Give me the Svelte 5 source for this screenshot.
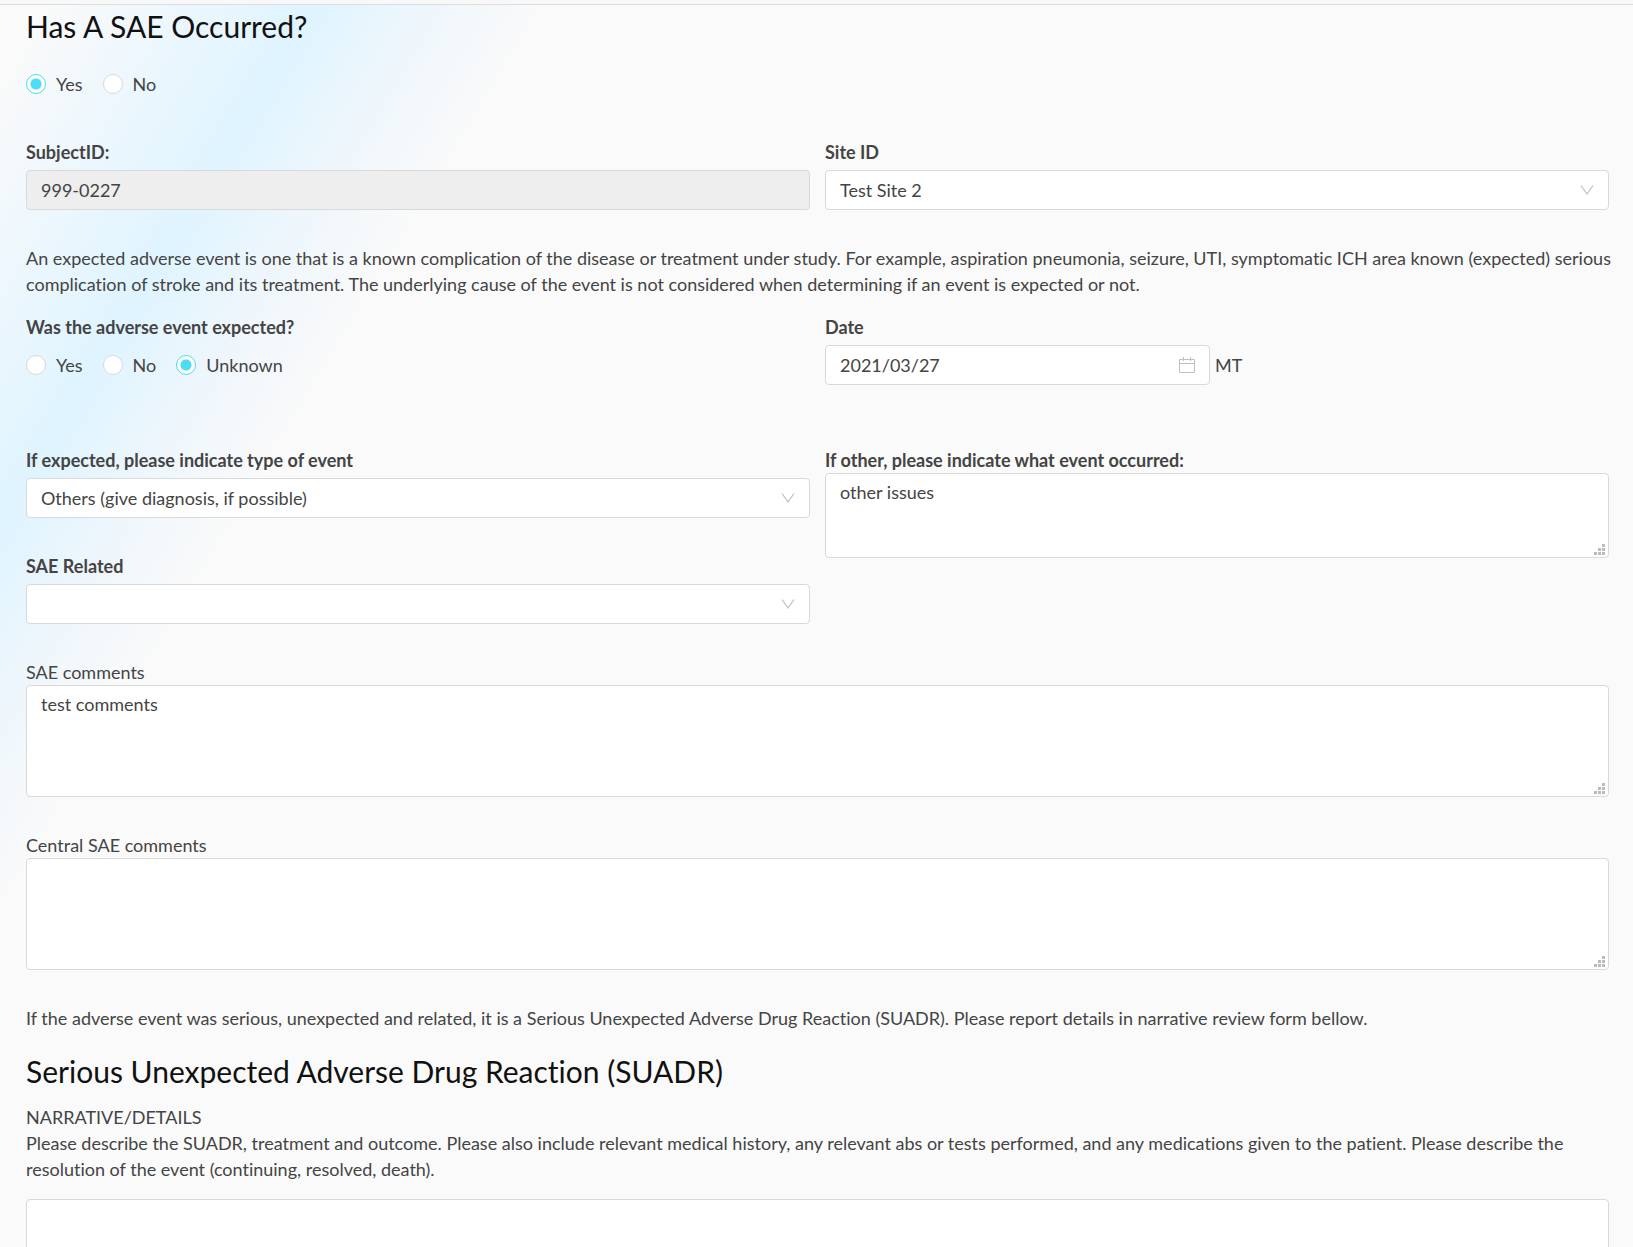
<style>
  :global(body) {
    margin: 0;
    background: #fafafa;
  }

  .page {
    box-sizing: border-box;
    border-top: 4px solid #f8f8f9;
    background: linear-gradient(121deg, #fafafa 40px, #edf7fd 150px, #dff4ff 270px, #edf6fc 360px, #fafafa 470px);
    color: #444;
    font: 18px/26px Lato, sans-serif;
    font-variant-ligatures: none;
  }

  form {
    padding: 0 24px 0 26px;
    border-top: 1px solid #dcdde0;
  }

  h2 {
    margin: 0;
    color: #111;
    font: 400 30px/42px Lato, sans-serif;
    font-variant-ligatures: none;
  }

  p {
    margin: 0 -8px 0 0;
  }

  fieldset {
    margin: 0;
    padding: 0;
    border: 0;
    min-width: 0;
  }

  legend {
    padding: 0;
  }

  .bold {
    font-weight: 700;
  }

  .radios {
    display: flex;
    align-items: center;
    gap: 20px;
    height: 40px;
  }

  .occurred {
    margin: 17px 0 35px;
  }

  .radios label {
    display: flex;
    align-items: center;
    gap: 10px;
  }

  input[type='radio'] {
    appearance: none;
    box-sizing: border-box;
    width: 20px;
    height: 20px;
    margin: 0;
    border: 1px solid #d9d9d9;
    border-radius: 50%;
    background: #fff;
  }

  input[type='radio']:checked {
    border-color: #4cdcf4;
    background: radial-gradient(circle, #4cdcf4 5px, #fff 6px);
  }

  .row {
    display: grid;
    grid-template-columns: 1fr 1fr;
    column-gap: 15px;
    align-items: start;
    margin-bottom: 35px;
  }

  .event {
    margin-bottom: 62px;
  }

  .column {
    display: grid;
    gap: 35px;
  }

  .field {
    display: flex;
    flex-direction: column;
  }

  .spaced {
    gap: 5px;
  }

  .choice .radios {
    margin-top: 5px;
  }

  .wide {
    margin-bottom: 35px;
  }

  .control {
    position: relative;
    display: flex;
  }

  input[type='text'],
  select,
  textarea {
    appearance: none;
    box-sizing: border-box;
    display: block;
    width: 100%;
    height: 40px;
    margin: 0;
    padding: 0 14px;
    border: 1px solid #d9d9d9;
    border-radius: 4px;
    background: #fff;
    color: #444;
    font: inherit;
  }

  input[type='text']:disabled {
    background: #eee;
    opacity: 1;
  }

  textarea {
    height: 112px;
    padding: 5px 14px;
    resize: vertical;
  }

  textarea::-webkit-resizer {
    display: none;
  }

  textarea.short {
    height: 85px;
  }

  .arrow,
  .calendar,
  .grip {
    position: absolute;
    pointer-events: none;
  }

  .arrow {
    top: 14px;
    right: 15px;
  }

  .calendar {
    top: 12px;
    right: 15px;
  }

  .grip {
    right: 4px;
    bottom: 3px;
  }

  .date {
    display: flex;
    align-items: center;
    gap: 5px;
  }

  .date .control {
    width: 385px;
  }

  .intro {
    margin-bottom: 17px;
  }

  .suadr {
    margin: 19px 0 12px;
  }
</style>

{#snippet arrow()}
  <svg class="arrow" width="14" height="12" viewBox="0 0 14 12" fill="none" stroke="#bfbfbf" stroke-width="1.2" aria-hidden="true">
    <path d="M1 1.5 7 10l6-8.5" />
  </svg>
{/snippet}

{#snippet grip()}
  <svg class="grip" width="11" height="11" viewBox="0 0 11 11" fill="#bbb" aria-hidden="true">
    <path d="M8 0h3v3H8zM4 4h3v3H4zM8 4h3v3H8zM0 8h3v3H0zM4 8h3v3H4zM8 8h3v3H8z" />
  </svg>
{/snippet}

<div class="page">
  <form>
    <h2 id="occurred">Has A SAE Occurred?</h2>
    <div class="radios occurred" role="radiogroup" aria-labelledby="occurred">
      {#each ['Yes', 'No'] as option}
        <label><input type="radio" name="occurred" value={option} bind:group={occurred} />{option}</label>
      {/each}
    </div>

    <div class="row">
      <div class="field spaced">
        <label class="bold" for="subject">SubjectID:</label>
        <input id="subject" type="text" value="999-0227" disabled />
      </div>
      <div class="field spaced">
        <label class="bold" for="site">Site ID</label>
        <div class="control">
          <select id="site" bind:value={site}>
            {#each sites as name}
              <option value={name}>{name}</option>
            {/each}
          </select>
          {@render arrow()}
        </div>
      </div>
    </div>

    <p class="intro">An expected adverse event is one that is a known complication of the disease or treatment under study. For example, aspiration pneumonia, seizure, UTI, symptomatic ICH area known (expected) serious complication of stroke and its treatment. The underlying cause of the event is not considered when determining if an event is expected or not.</p>

    <div class="row event">
      <fieldset class="choice">
        <legend class="bold">Was the adverse event expected?</legend>
        <div class="radios">
          {#each ['Yes', 'No', 'Unknown'] as option}
            <label><input type="radio" name="expected" value={option} bind:group={expected} />{option}</label>
          {/each}
        </div>
      </fieldset>
      <div class="field spaced">
        <label class="bold" for="date">Date</label>
        <div class="date">
          <div class="control">
            <input id="date" type="text" bind:value={date} />
            <svg class="calendar" width="16" height="16" viewBox="0 0 16 16" fill="none" stroke="#bfbfbf" aria-hidden="true">
              <path d="M.5 2.5h15v13H.5zM.5 6.5h15M4.5 0v4M11.5 0v4" />
            </svg>
          </div>
          <span>MT</span>
        </div>
      </div>
    </div>

    <div class="row">
      <div class="column">
        <div class="field spaced">
          <label class="bold" for="type">If expected, please indicate type of event</label>
          <div class="control">
            <select id="type" bind:value={eventType}>
              {#each eventTypes as name}
                <option value={name}>{name}</option>
              {/each}
            </select>
            {@render arrow()}
          </div>
        </div>
        <div class="field spaced">
          <label class="bold" for="related">SAE Related</label>
          <div class="control">
            <select id="related" bind:value={related}>
              <option value=""></option>
            </select>
            {@render arrow()}
          </div>
        </div>
      </div>
      <div class="field">
        <label class="bold" for="other">If other, please indicate what event occurred:</label>
        <div class="control">
          <textarea id="other" class="short" bind:value={other}></textarea>
          {@render grip()}
        </div>
      </div>
    </div>

    <div class="field wide">
      <label for="comments">SAE comments</label>
      <div class="control">
        <textarea id="comments" bind:value={comments}></textarea>
        {@render grip()}
      </div>
    </div>

    <div class="field wide">
      <label for="central">Central SAE comments</label>
      <div class="control">
        <textarea id="central" bind:value={central}></textarea>
        {@render grip()}
      </div>
    </div>

    <p>If the adverse event was serious, unexpected and related, it is a Serious Unexpected Adverse Drug Reaction (SUADR). Please report details in narrative review form bellow.</p>

    <h2 class="suadr">Serious Unexpected Adverse Drug Reaction (SUADR)</h2>
    <label for="narrative">NARRATIVE/DETAILS</label>
    <p class="intro">Please describe the SUADR, treatment and outcome. Please also include relevant medical history, any relevant abs or tests performed, and any medications given to the patient. Please describe the resolution of the event (continuing, resolved, death).</p>
    <div class="control">
      <textarea id="narrative" bind:value={narrative}></textarea>
      {@render grip()}
    </div>
  </form>
</div>

<script>
  let sites = ['Test Site 2']
  let eventTypes = ['Others (give diagnosis, if possible)']

  let occurred = 'Yes'
  let expected = 'Unknown'
  let site = sites[0]
  let date = '2021/03/27'
  let eventType = eventTypes[0]
  let related = ''
  let other = 'other issues'
  let comments = 'test comments'
  let central = ''
  let narrative = ''
</script>
